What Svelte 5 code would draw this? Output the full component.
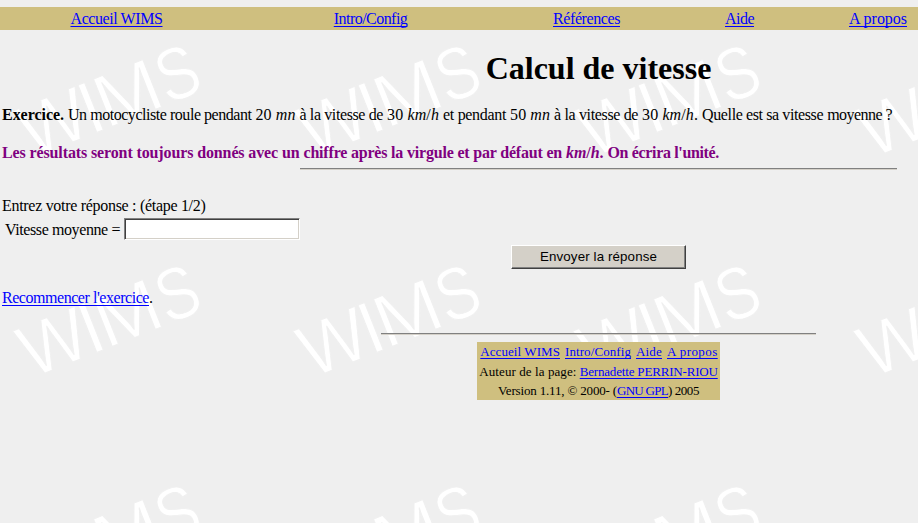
<script>
  const nav = [
    ['Accueil WIMS', 92],
    ['Intro/Config', 73.5],
    ['Références', 67],
    ['Aide', 29],
    ['A propos', 58],
  ];
  const footNav = [
    ['Accueil WIMS', 79.7],
    ['Intro/Config', 66],
    ['Aide', 26],
    ['A propos', 50.7],
  ];
  // letter, offset along the baseline, horizontal stretch
  const mark = [
    ['W', 0, 0.97],
    ['I', 64, 1],
    ['M', 81, 1.07],
    ['S', 147, 0.83],
  ];
  let answer = $state('');

  // Adjusts tracking so that a run of text fills the given measure.
  function fit(node, width) {
    const natural = node.getBoundingClientRect().width;
    const count = [...node.textContent].length;
    node.style.letterSpacing = `${(width - natural) / count}px`;
  }
</script>

<div class="page">
  <svg class="watermark" width="918" height="523" aria-hidden="true">
    <defs>
      <pattern id="wims" width="280" height="220" patternUnits="userSpaceOnUse">
        <g transform="translate(31 158.5) rotate(-21.6)">
          {#each mark as [letter, x, stretch]}
            <text transform="translate({x} 0) scale({stretch} 1)">{letter}</text>
          {/each}
        </g>
      </pattern>
    </defs>
    <rect width="918" height="523" fill="url(#wims)" />
  </svg>

  <nav>
    {#each nav as [item, width]}
      <span><a href="#top" use:fit={width}>{item}</a></span>
    {/each}
  </nav>

  <main>
    <h1>Calcul de vitesse</h1>
    <p class="question">
      <b use:fit={62}>Exercice.</b>
      <span use:fit={183.5}>Un motocycliste roule pendant</span>
      <span use:fit={40}>20 <i>mn</i></span>
      <span use:fit={83.5}>à la vitesse de</span>
      <span use:fit={52}>30 <i>km</i>/<i>h</i></span>
      <span use:fit={63}>et pendant</span>
      <span use:fit={40}>50 <i>mn</i></span>
      <span use:fit={84}>à la vitesse de</span>
      <span use:fit={56}>30 <i>km</i>/<i>h</i>.</span>
      <span use:fit={121}>Quelle est sa vitesse</span>
      <span use:fit={65}>moyenne ?</span>
    </p>
    <p class="note">
      <span use:fit={297.5}>Les résultats seront toujours donnés avec un</span>
      <span use:fit={258.5}>chiffre après la virgule et par défaut en</span>
      <span use:fit={37.5}><i>km</i>/<i>h</i>.</span>
      <span use:fit={111.5}>On écrira l'unité.</span>
    </p>
    <hr class="mid" />
    <form onsubmit={(e) => e.preventDefault()}>
      <p class="prompt"><span use:fit={203.5}>Entrez votre réponse : (étape 1/2)</span></p>
      <label><span use:fit={115}>Vitesse moyenne =</span><input type="text" bind:value={answer} /></label>
      <button type="submit"><span use:fit={117}>Envoyer la réponse</span></button>
    </form>
    <p class="again"><a href="#again" use:fit={147}>Recommencer l'exercice</a>.</p>
    <hr class="low" />
  </main>

  <footer>
    <div class="links">
      {#each footNav as [item, width]}<a href="#top" use:fit={width}>{item}</a>{/each}
    </div>
    <div><span use:fit={97.2}>Auteur de la page:</span> <a href="#author" use:fit={138}>Bernadette PERRIN-RIOU</a></div>
    <div><span use:fit={119}>Version 1.11, © 2000- (</span><a href="#gpl" use:fit={51}>GNU GPL</a><span use:fit={31}>) 2005</span></div>
  </footer>
</div>

<style>
  :global(body) {
    overflow: hidden;
  }
  .page {
    position: relative;
    isolation: isolate;
    width: 1197px;
    height: 523px;
    overflow: hidden;
    padding-top: 7px;
    box-sizing: border-box;
    background: #efefef;
    color: #000;
    font: 16px/19px 'Liberation Serif', 'Times New Roman', serif;
    white-space: nowrap;
  }
  .watermark {
    position: absolute;
    inset: 0;
    z-index: -1;
  }
  .watermark text {
    fill: #fff;
    stroke: #efefef;
    stroke-width: 0.8px;
    font: 74px 'Liberation Sans', Arial, sans-serif;
  }
  a {
    color: #00f;
    text-decoration: underline;
    text-decoration-skip-ink: none;
    text-decoration-thickness: 1px;
    text-underline-offset: 2px;
  }
  nav {
    display: grid;
    grid-template-columns: 233px 275px 157px 149px 128px;
    height: 23px;
    line-height: 24px;
    background: #cfbf7f;
    text-align: center;
  }
  main {
    padding: 0 2px;
  }
  h1 {
    margin: 19px 0 0;
    height: 38px;
    font-size: 32px;
    line-height: 38px;
    text-align: center;
  }
  p {
    margin: 0;
    height: 19px;
  }
  .question {
    margin-top: 18px;
  }
  .note {
    margin-top: 19px;
    color: #800080;
    font-weight: bold;
  }
  hr {
    height: 1px;
    margin: 0 auto;
    border: 0;
    background: #808080;
    border-bottom: 1px solid #d4d0c8;
  }
  .mid {
    width: 597px;
    margin-top: 6px;
  }
  .prompt {
    margin-top: 26px;
  }
  label {
    display: flex;
    align-items: center;
    gap: 4px;
    height: 22px;
    margin-top: 3px;
    padding-left: 3px;
  }
  input {
    width: 176px;
    height: 22px;
    box-sizing: border-box;
    padding: 1px 3px;
    border: 1px solid;
    border-color: #808080 #fff #fff #808080;
    box-shadow: inset 1px 1px #404040, inset -1px -1px #d4d0c8;
    background: #fff;
    font: 13px 'Liberation Sans', Arial, sans-serif;
    outline: none;
  }
  button {
    display: block;
    width: 175px;
    height: 24px;
    margin: 5px auto 0;
    padding: 0;
    border: 1px solid;
    border-color: #fff #404040 #404040 #fff;
    border-radius: 0;
    box-shadow: inset -1px -1px #808080;
    background: #d4d0c8;
    color: #000;
    font: 13.33px/20px 'Liberation Sans', Arial, sans-serif;
  }
  .again {
    margin-top: 19px;
  }
  .low {
    width: 435px;
    margin-top: 26px;
  }
  footer {
    width: 243px;
    height: 58px;
    margin: 7px auto 0;
    background: #cfbf7f;
    font-size: 13px;
    line-height: 19px;
    text-align: center;
  }
  .links {
    display: flex;
    justify-content: center;
    gap: 5px;
    height: 20px;
    padding-left: 1px;
    line-height: 20px;
  }
</style>
